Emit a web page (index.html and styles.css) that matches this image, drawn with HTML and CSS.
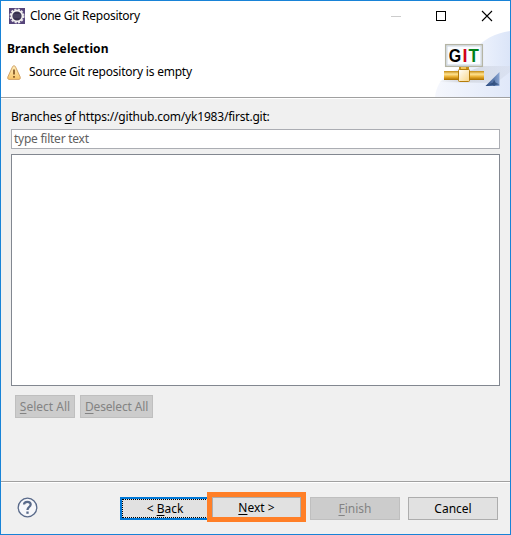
FILE: index.html
```html
<!DOCTYPE html>
<html lang="en">
<head>
<meta charset="utf-8">
<title>Clone Git Repository</title>
<link rel="stylesheet" href="styles.css">
</head>
<body>
<div class="window">
  <header class="header">
    <div class="titlebar">
      <svg class="app-icon" width="16" height="16" viewBox="0 0 16 16">
        <rect width="16" height="16" fill="#56457a"/>
        <circle cx="8" cy="8" r="6.5" fill="none" stroke="#e8e5ea" stroke-width="2" stroke-dasharray="2.1 1.3"/>
        <circle cx="8" cy="8" r="5.4" fill="#37304f" stroke="#f2f0f0" stroke-width="1.6"/>
        <path d="M4.2 7h7.6M4.2 9h7.6" stroke="#5e5878" stroke-width=".8"/>
      </svg>
      <span class="title">Clone Git Repository</span>
      <svg class="controls" width="102" height="12" viewBox="0 0 102 12" fill="none">
        <path d="M0 6.5h10" stroke="#ccc"/>
        <rect x="45.5" y="1.5" width="9" height="9" stroke="#000"/>
        <path d="M91 1l10 10M101 1L91 11" stroke="#000" stroke-width="1.1"/>
      </svg>
    </div>
    <h1 class="heading"><span>Branch Selection</span></h1>
    <div class="message">
      <svg width="14" height="15" viewBox="0 0 14 15">
        <defs><linearGradient id="warn" x2="0" y2="1"><stop stop-color="#fff0c0"/><stop offset="1" stop-color="#f8c468"/></linearGradient></defs>
        <path d="M5.7 1.4Q7 0 8.3 1.4L13.2 12Q13.8 14.3 12 14.4H2Q.2 14.3.8 12Z" fill="url(#warn)" stroke="#d3a468"/>
        <path d="M7 4.5v5M7 11v1.7" stroke="#704214" stroke-width="1.5"/>
      </svg>
      <span class="message-text">Source Git repository is empty</span>
    </div>
    <svg class="banner" width="75" height="70" viewBox="435 27 75 70">
      <defs>
        <linearGradient id="sky" x2="1" y2="0"><stop stop-color="#fafbff"/><stop offset="1" stop-color="#dbe5f8"/></linearGradient>
        <linearGradient id="low" x2="1" y2="0"><stop stop-color="#f5f7fd"/><stop offset="1" stop-color="#e0e8f9"/></linearGradient>
        <linearGradient id="pipe" x2="0" y2="1"><stop stop-color="#c48a12"/><stop offset=".35" stop-color="#ffe391"/><stop offset=".65" stop-color="#e9ac2b"/><stop offset="1" stop-color="#a86e00"/></linearGradient>
        <linearGradient id="node" x2="1" y2="1"><stop stop-color="#fff"/><stop offset="1" stop-color="#f9d687"/></linearGradient>
        <linearGradient id="tri" x2="1" y2="0"><stop stop-color="#24457c"/><stop offset="1" stop-color="#8ba6d3"/></linearGradient>
        <linearGradient id="shade" x2="1" y2="0"><stop stop-color="#ccc" stop-opacity="0"/><stop offset=".3" stop-color="#c4c7ce" stop-opacity=".6"/><stop offset="1" stop-color="#c9d0df" stop-opacity=".3"/></linearGradient>
      </defs>
      <path d="M459 97C460 58 480 35 510 31V97Z" fill="url(#sky)"/>
      <path d="M435 97C437 78 452 67 475 66H510V97Z" fill="url(#low)"/>
      <path d="M438 82L483 66H510V72L496 83Z" fill="url(#shade)"/>
      <rect x="445.7" y="44.7" width="36.6" height="21.6" fill="#fafcff" stroke="#b5b5a5" stroke-width="1.5"/>
      <rect x="447" y="46" width="34" height="19" fill="none" stroke="#cbd5e2"/>
      <g class="logo-text"><text x="448.8" y="62.2" textLength="12.4" lengthAdjust="spacingAndGlyphs">G</text><text x="462.6" y="62.2" textLength="5" lengthAdjust="spacingAndGlyphs" fill="#d00018">I</text><text x="468.6" y="62.2" textLength="10.4" lengthAdjust="spacingAndGlyphs" fill="#008018">T</text></g>
      <rect x="459" y="67" width="10" height="4" fill="#c68d18"/><rect x="461" y="67" width="5" height="3" fill="#f3c65c"/>
      <rect x="444" y="71" width="40" height="9" fill="url(#pipe)"/>
      <rect x="458.5" y="69.5" width="11" height="12" rx="1" fill="url(#node)" stroke="#b47c0b"/>
      <path d="M499.5 72V86H485.5Z" fill="url(#tri)"/>
      <path d="M489 84.5l4-2 1-3 1.5 3 4 2-4 .5-1.5 1-1-1Z" fill="#163363" opacity=".6"/>
    </svg>
  </header>

  <main class="content">
    <label class="branches"><span>Branches <u>o</u>f https://github.com/yk1983/first.git:</span></label>
    <div class="filter"><span>type filter text</span></div>
    <div class="list"></div>
    <div class="selection">
      <button class="btn disabled select" disabled><span><u>S</u>elect All</span></button>
      <button class="btn disabled deselect" disabled><span><u>D</u>eselect All</span></button>
    </div>
  </main>

  <footer class="footer">
    <svg class="help" width="21" height="21" viewBox="0 0 21 21" fill="none" stroke="#596a8a">
      <circle cx="10.5" cy="10.5" r="9.3" fill="#f6f7fa" stroke-width="1.3"/>
      <path d="M7 7.5Q7.2 4.8 10.3 4.8Q13.7 4.8 13.7 7.6Q13.7 9 12 10.1Q10.5 11.2 10.5 13" stroke-width="2.2"/>
      <path d="M10.5 14.5v2.3" stroke-width="2.3"/>
    </svg>
    <button class="btn back"><span>&lt; <u>B</u>ack</span></button>
    <div class="highlight"><button class="btn next"><span><u>N</u>ext &gt;</span></button></div>
    <button class="btn disabled finish" disabled><span><u>F</u>inish</span></button>
    <button class="btn cancel"><span>Cancel</span></button>
  </footer>
</div>
</body>
</html>
```
FILE: styles.css
```css
* { box-sizing: border-box; }
body {
  margin: 0;
  font: 12px/16px "Noto Sans", sans-serif;
  color: #000;
}
svg { display: block; flex: none; }
u { text-underline-offset: 2px; text-decoration-skip-ink: none; }
.window {
  width: 511px;
  height: 535px;
  border: 1px solid #1883d7;
  background: #f0f0f0;
  display: flex;
  flex-direction: column;
}
.header {
  position: relative;
  height: 97px;
  flex: none;
  background: #fff;
  border-bottom: 1px solid #a0a0a0;
}
.titlebar { display: flex; align-items: center; height: 29px; padding-left: 8px; }
.title { margin-left: 5px; letter-spacing: -.25px; }
.controls { margin-left: auto; margin-right: 17px; }
.heading { margin: 11px 0 0 6px; font-size: 12px; line-height: 16px; letter-spacing: .1px; }
.message { display: flex; align-items: center; margin: 7px 0 0 6px; height: 16px; }
.message-text { margin-left: 8px; letter-spacing: -.22px; }
.banner { position: absolute; right: 0; bottom: 0; }
.logo-text { font: bold 18.5px "Liberation Sans", sans-serif; }
.content {
  height: 384px;
  flex: none;
  padding: 10px 10px 0;
  border-top: 1px solid #fff;
  border-bottom: 1px solid #a0a0a0;
}
.branches { display: block; height: 20px; line-height: 16px; letter-spacing: -.2px; }
.filter {
  height: 20px;
  padding-left: 2px;
  line-height: 18px;
  letter-spacing: -.25px;
  border: 1px solid #abadb3;
  background: #fff;
  color: #606060;
}
.list { height: 232px; margin-top: 5px; border: 1px solid #828790; background: #fff; }
.selection { display: flex; gap: 5px; padding: 9px 4px; }
.btn {
  height: 23px;
  width: 90px;
  padding: 0;
  border: 1px solid #adadad;
  border-radius: 0;
  background: #e1e1e1;
  font: inherit;
  line-height: 19px;
  color: #000;
  flex: none;
}
.disabled { border-color: #bfbfbf; background: #ccc; color: #838383; }
.select { width: 60px; }
.deselect { width: 73px; letter-spacing: -.15px; }
.footer {
  flex: 1;
  display: flex;
  align-items: center;
  padding: 0 12px 0 16px;
  border-top: 1px solid #fff;
}
.help { margin-bottom: 3px; }
.back {
  width: 90px;
  margin-left: 82px;
  border: 2px solid #0078d7;
  outline: 1px dotted #000;
  outline-offset: -3px;
}
.highlight { margin: 0 0 3px -3px; border: 5px solid #ff7f27; width: 99px; height: 30px; z-index: 1; }
.next { display: block; height: 20px; width: 89px; border-bottom: 0; line-height: 20px; }
.finish { margin-left: 4px; }
.cancel { margin-left: 8px; }
```
